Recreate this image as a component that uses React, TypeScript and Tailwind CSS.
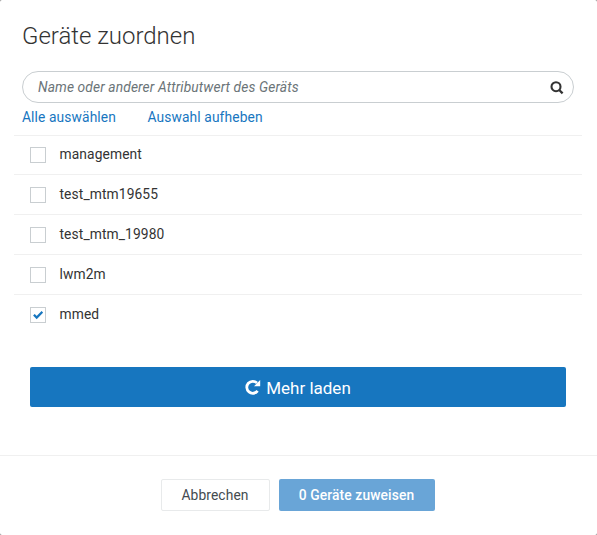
import { useState } from "react";

const initialDevices = [
  { name: "management", checked: false },
  { name: "test_mtm19655", checked: false },
  { name: "test_mtm_19980", checked: false },
  { name: "lwm2m", checked: false },
  { name: "mmed", checked: true },
];

function SearchIcon() {
  return (
    <svg className="mt-px h-[14px] w-[14px]" viewBox="0 0 14 14" fill="none" stroke="#333333">
      <circle cx="6" cy="5.7" r="4.5" strokeWidth="2.1" />
      <path d="M9.2 9l3.4 3.4" strokeWidth="2.3" />
    </svg>
  );
}

function ReloadIcon() {
  return (
    <svg className="h-4 w-4" viewBox="0 0 16 16" fill="none">
      <path d="M12.6 11.9A6 6 0 1 1 12 4" stroke="currentColor" strokeWidth="2.8" />
      <path d="M15.2 1v6.2H9z" fill="currentColor" />
    </svg>
  );
}

function CheckIcon() {
  return (
    <svg className="h-[10px] w-[10px]" viewBox="0 0 10 10" fill="none" stroke="#1776bf">
      <path d="M.9 4.7l2.8 2.8L9.4 1.8" strokeWidth="2.3" />
    </svg>
  );
}

export default function App() {
  const [devices, setDevices] = useState(initialDevices);
  const setAll = (checked: boolean) => setDevices(devices.map((d) => ({ ...d, checked })));
  const toggle = (name: string) =>
    setDevices(devices.map((d) => (d.name === name ? { ...d, checked: !d.checked } : d)));

  return (
    <div className="h-[535px] w-[597px] bg-[#8a8a8a] font-['Roboto',sans-serif] text-[13.8px] leading-5 tracking-[0.11px] text-[#333333]">
      <div className="flex h-full flex-col rounded-[2px] bg-white">
        <h1 className="mt-[20px] ml-[22px] text-[24px] leading-8 font-light tracking-[-0.02px]">Geräte zuordnen</h1>
        <div className="mt-[19px] mr-[23px] ml-[22px] flex h-8 shrink-0 items-center rounded-full border border-[#c9ced1] pr-[9px] pl-[15px]">
          <input
            className="min-w-0 flex-1 outline-none placeholder:text-[#6b7478] placeholder:italic placeholder:opacity-100"
            placeholder="Name oder anderer Attributwert des Geräts"
          />
          <SearchIcon />
        </div>
        <div className="mt-1 ml-[22px] flex h-7 shrink-0 gap-[31.5px] text-[#1776bf]">
          <button className="h-5" onClick={() => setAll(true)}>Alle auswählen</button>
          <button className="h-5" onClick={() => setAll(false)}>Auswahl aufheben</button>
        </div>
        <ul className="mr-[15px] ml-[14px] shrink-0 border-t border-[#f0f0f0]">
          {devices.map((d) => (
            <li key={d.name} className="group h-10 border-b border-[#f0f0f0] first:h-[39px] last:border-b-0">
              <label className="flex h-[38px] items-center pl-4">
                <input type="checkbox" className="sr-only" checked={d.checked} onChange={() => toggle(d.name)} />
                <span className="mt-px flex h-4 w-4 items-center justify-center border border-[#c9ced1] group-first:-mt-px">
                  {d.checked && <CheckIcon />}
                </span>
                <span className="ml-[13.5px] group-first:-mt-0.5">{d.name}</span>
              </label>
            </li>
          ))}
        </ul>
        <button className="mt-8 mr-[31px] ml-[30px] flex h-10 shrink-0 items-center justify-center gap-[5px] rounded-[2px] bg-[#1776bf] text-[17px] tracking-normal text-white">
          <ReloadIcon />
          <span className="mt-px">Mehr laden</span>
        </button>
        <div className="mt-[48px] flex flex-1 justify-center gap-[9px] border-t border-[#f0f0f0] pt-[23px] pr-[2px]">
          <button className="h-8 w-[109px] rounded-[2px] border border-[#e8eaeb] text-[#444b50]">Abbrechen</button>
          <button className="h-8 w-[156px] rounded-[2px] bg-[#69a5d7] font-medium text-white">0 Geräte zuweisen</button>
        </div>
      </div>
    </div>
  );
}
